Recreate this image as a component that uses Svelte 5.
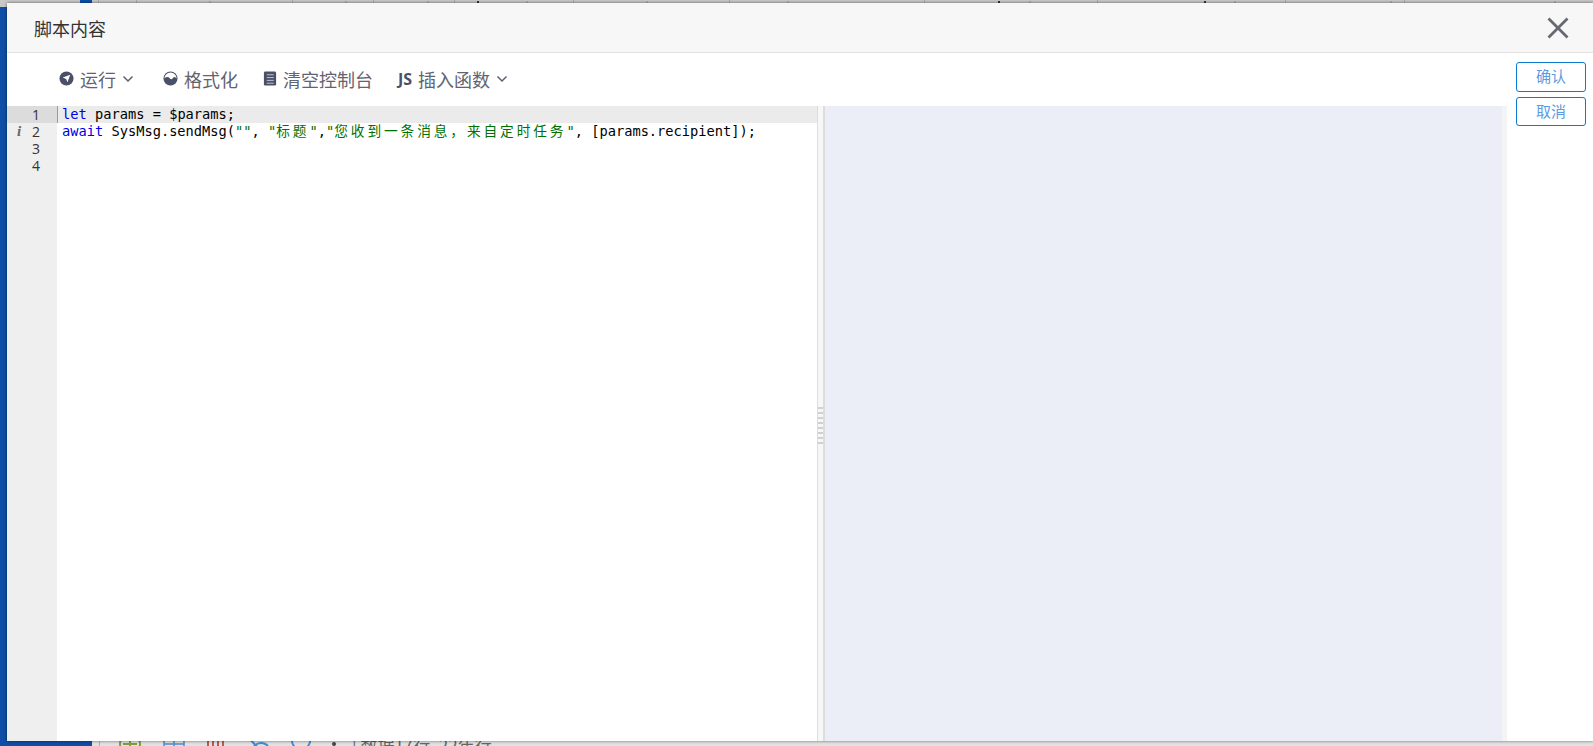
<script lang="ts">
  const lines = [1, 2, 3, 4]
  const ticks = Array.from({ length: 8 })

  // column edges of the table behind the dialog, only a sliver of it shows
  const edges: [number, string][] = [
    [99, 's'], [137, 's'], [212, 'm'], [293, 's'], [348, 'm'], [374, 's'], [430, 'm'], [455, 's'],
    [480, 'd'], [529, 'm'], [574, 's'], [649, 'm'], [730, 's'], [790, 'm'], [925, 's'], [1001, 'd'],
    [1032, 'm'], [1098, 's'], [1207, 'd'], [1237, 'm'], [1286, 's'], [1393, 'm'], [1405, 's'], [1557, 'm'],
  ]
  const cells = edges.map(([x, kind], i) => ({ kind, width: x - (i ? edges[i - 1][0] : 92) }))
</script>

<div class="page">
  <div class="sidebar"><div class="corner"></div></div>
  <div class="behind">
    <div class="top-strip">
      {#each cells as c}
        <span class="cell {c.kind}" style="width: {c.width}px"></span>
      {/each}
    </div>
    <div class="bottom-bar">
      <svg viewBox="0 0 24 24" width="24" height="24" fill="none" stroke="#7aa23c" stroke-width="2">
        <circle cx="12" cy="12" r="10" />
        <path d="M12 2 V22 M5 12 H19" />
      </svg>
      <svg viewBox="0 0 24 24" width="24" height="24" fill="none" stroke="#4a8fd0" stroke-width="1.5">
        <rect x="2" y="2" width="20" height="20" />
        <path d="M2 12 H22 M12 2 V22" />
      </svg>
      <svg viewBox="0 0 20 24" width="20" height="24" fill="none" stroke="#b03020" stroke-width="1.5">
        <path d="M2 2 V22 M7 2 V22 M12 2 V22 M17 2 V22" />
      </svg>
      <svg viewBox="0 0 24 24" width="24" height="24" fill="none" stroke="#3a8fd8" stroke-width="2">
        <path d="M2 5 L12 16 H22 M8 14 C12 10 18 10 22 14" />
      </svg>
      <svg viewBox="0 0 24 24" width="22" height="24" fill="none" stroke="#3a8fd8" stroke-width="2">
        <circle cx="12" cy="8" r="10" />
      </svg>
      <span class="bar-dot"></span>
      <span class="bar-text">| 数据17行, 22年行</span>
    </div>
  </div>

  <div class="modal">
    <header class="modal-head">
      <span class="modal-title">脚本内容</span>
      <svg class="close" viewBox="0 0 22 22" width="22" height="22">
        <path d="M1.5 1.5 L20.5 20.5 M20.5 1.5 L1.5 20.5" stroke="#666a70" stroke-width="2.8" fill="none" />
      </svg>
    </header>

    <div class="modal-body">
      <div class="main">
        <div class="toolbar">
          <button class="tool">
            <svg viewBox="0 0 16 16" width="15" height="15">
              <circle cx="8" cy="8" r="7.5" fill="#4a5068" />
              <path d="M12 4 L9 12 L7.6 8.4 L4 7 Z" fill="#fff" />
            </svg>
            <span>运行</span>
            <svg class="caret" viewBox="0 0 12 8" width="12" height="8">
              <path d="M1.5 1.5 L6 6 L10.5 1.5" stroke="#5a6072" stroke-width="1.5" fill="none" />
            </svg>
          </button>
          <button class="tool">
            <svg viewBox="0 0 16 16" width="15" height="15">
              <circle cx="8" cy="8" r="7.5" fill="#4a5068" />
              <path d="M1.5 8 A6.5 6.5 0 0 1 14.5 8 C13 6 12 5.8 10.6 7.4 C9.5 8.8 8.6 9.4 7.4 8 C5.8 6 3.4 6 1.5 8 Z" fill="#fff" />
            </svg>
            <span>格式化</span>
          </button>
          <button class="tool">
            <svg viewBox="0 0 14 16" width="14" height="15">
              <rect x="0.5" y="0.5" width="13" height="15" rx="1.5" fill="#4a5068" />
              <path d="M3.5 4 H11 M3.5 7 H11 M3.5 10 H11 M3.5 13 H11" stroke="#c5c8d2" stroke-width="1" />
            </svg>
            <span>清空控制台</span>
          </button>
          <button class="tool">
            <b class="js">JS</b>
            <span>插入函数</span>
            <svg class="caret" viewBox="0 0 12 8" width="12" height="8">
              <path d="M1.5 1.5 L6 6 L10.5 1.5" stroke="#5a6072" stroke-width="1.5" fill="none" />
            </svg>
          </button>
        </div>

        <div class="workspace">
          <div class="editor">
            <div class="gutter">
              {#each lines as n}
                <div class="line-no" class:active={n === 1}>
                  {#if n === 2}<i class="info">i</i>{/if}
                  {n}
                </div>
              {/each}
            </div>
            <div class="code">
              <div class="code-line current"><span class="kw">let</span> params = $params;</div>
              <div class="code-line"><span class="kw">await</span> SysMsg.sendMsg(<span class="str">""</span>, <span class="str">"<span class="cjk">标题</span>"</span>,<span class="str">"<span class="cjk">您收到一条消息，来自定时任务</span>"</span>, [params.recipient]);</div>
            </div>
          </div>
          <div class="splitter">
            <div class="grip">
              {#each ticks as _}
                <span></span>
              {/each}
            </div>
          </div>
          <div class="console"></div>
          <div class="edge"></div>
        </div>
      </div>

      <aside class="actions">
        <button class="action">确认</button>
        <button class="action">取消</button>
      </aside>
    </div>
  </div>
</div>

<style>
  :global(body) {
    margin: 0;
    overflow: hidden;
  }
  .page {
    position: relative;
    display: flex;
    width: 1593px;
    height: 746px;
    overflow: hidden;
    font-family: "Microsoft YaHei", "Noto Sans CJK SC", "Liberation Sans", sans-serif;
  }
  .sidebar {
    width: 92px;
    flex-shrink: 0;
    background: #0e4ea6;
  }
  .corner {
    width: 80px;
    height: 7px;
    background: #c8c8c8;
  }
  .behind {
    flex: 1;
    display: flex;
    flex-direction: column;
    justify-content: space-between;
    background: #e2e2e2;
  }
  .top-strip {
    display: flex;
    height: 3px;
    background: #c8c8c8;
  }
  .cell {
    box-sizing: border-box;
    flex-shrink: 0;
    border-right: 1px solid transparent;
  }
  .cell.s { border-right-color: #a8a8a8; }
  .cell.m { background: linear-gradient(#b0b0b0, #b0b0b0) right 1px / 2px 2px no-repeat; }
  .cell.d { background: linear-gradient(#333, #333) right 1px / 2px 2px no-repeat; }
  .bottom-bar {
    display: flex;
    align-items: center;
    gap: 20px;
    height: 30px;
    margin-bottom: -13px;
    margin-left: 7px;
    padding-left: 18px;
    border-left: 1px solid #b0b0b0;
    flex-shrink: 0;
  }
  .bottom-bar svg {
    flex-shrink: 0;
  }
  .bar-dot {
    width: 4px;
    height: 4px;
    border-radius: 50%;
    background: #444;
  }
  .bar-text {
    margin-left: -4px;
    font-size: 17px;
    white-space: nowrap;
    color: #666;
  }
  .modal {
    position: absolute;
    left: 7px;
    top: 3px;
    right: 0;
    bottom: 5px;
    display: flex;
    flex-direction: column;
    background: #fff;
    box-shadow: 0 0 3px rgba(0, 0, 0, 0.55);
  }
  .modal-head {
    display: flex;
    align-items: center;
    justify-content: space-between;
    box-sizing: border-box;
    height: 50px;
    flex-shrink: 0;
    padding: 0 24px 0 27px;
    background: #f7f7f7;
    border-bottom: 1px solid #e2e2e2;
  }
  .modal-title {
    font-size: 18px;
    color: #333;
  }
  .close {
    display: block;
  }
  .modal-body {
    flex: 1;
    display: flex;
    min-height: 0;
  }
  .main {
    flex: 1;
    display: flex;
    flex-direction: column;
    min-width: 0;
  }
  .toolbar {
    display: flex;
    align-items: center;
    gap: 25px;
    box-sizing: border-box;
    height: 53px;
    flex-shrink: 0;
    padding: 0 0 2px 52px;
  }
  .tool {
    display: flex;
    align-items: center;
    gap: 6px;
    padding: 0;
    border: 0;
    background: none;
    font: inherit;
    font-size: 18px;
    color: #5f6470;
  }
  .tool svg {
    display: block;
    flex-shrink: 0;
  }
  .caret {
    margin-right: 4px;
  }
  .js {
    font-family: "Open Sans", "Liberation Sans", sans-serif;
    font-size: 16px;
    font-weight: 700;
    color: #4a5068;
  }
  .workspace {
    flex: 1;
    display: flex;
    min-height: 0;
  }
  .editor {
    display: flex;
    width: 810px;
    flex-shrink: 0;
    background: #fff;
    font-family: "DejaVu Sans Mono", "Noto Sans CJK SC", monospace;
    font-size: 13.7px;
    line-height: 17px;
  }
  .gutter {
    width: 50px;
    flex-shrink: 0;
    background: #efefef;
    color: #333;
  }
  .line-no {
    position: relative;
    height: 17px;
    padding-left: 25px;
    font-family: "Open Sans", "Liberation Sans", sans-serif;
    font-size: 14px;
  }
  .line-no.active {
    background: #dcdcdc;
  }
  .info {
    position: absolute;
    left: 10px;
    top: 0;
    font-family: "Liberation Serif", serif;
    font-weight: 700;
    font-size: 15px;
    color: #666;
  }
  .code {
    flex: 1;
    min-width: 0;
    color: #000;
  }
  .code-line {
    height: 17px;
    padding-left: 5px;
    white-space: pre;
  }
  .code-line.current {
    background: #ebebeb;
    box-shadow: inset 1px 0 0 #999;
  }
  .kw {
    color: #0000e6;
  }
  .str {
    color: #007000;
  }
  .cjk {
    letter-spacing: 2.9px;
  }
  .splitter {
    position: relative;
    width: 8px;
    box-sizing: border-box;
    flex-shrink: 0;
    background: #f7f7f7;
    border-left: 1px solid #ddd;
    border-right: 2px solid #ddd;
  }
  .grip {
    position: absolute;
    left: 0;
    top: 301px;
    display: flex;
    flex-direction: column;
    gap: 3px;
    width: 100%;
  }
  .grip span {
    height: 2px;
    background: #d0d0d0;
  }
  .console {
    flex: 1;
    background: #ebeef7;
  }
  .edge {
    width: 5px;
    flex-shrink: 0;
    background: #f4f4f4;
  }
  .actions {
    display: flex;
    flex-direction: column;
    gap: 5px;
    width: 86px;
    flex-shrink: 0;
    box-sizing: border-box;
    padding: 9px 0 0 9px;
  }
  .action {
    width: 70px;
    height: 29px;
    padding: 0 0 3px;
    box-sizing: border-box;
    border: 1px solid #0a7bd0;
    border-radius: 3px;
    background: #fff;
    color: #5b9be0;
    font: inherit;
    font-size: 15px;
  }
  .action:first-child {
    height: 30px;
  }
</style>
